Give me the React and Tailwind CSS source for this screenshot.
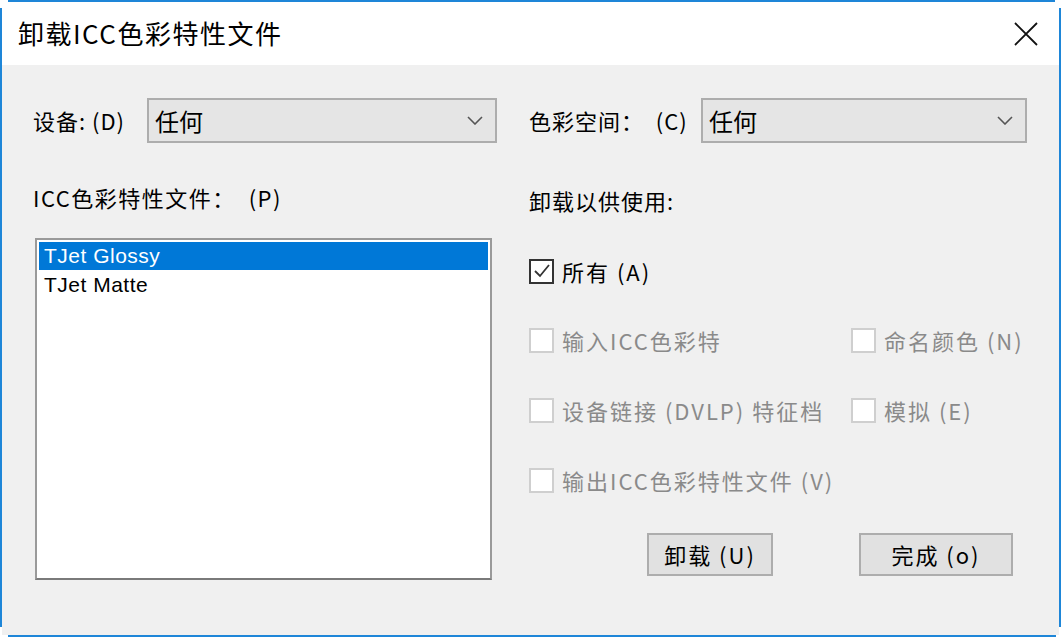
import React from "react";

const FONT = { fontFamily: '"Noto Sans CJK SC", "Liberation Sans", sans-serif' };

// --- small drawn glyphs ---
function Chevron() {
  return (
    <svg width="16" height="9" viewBox="0 0 16 9" className="shrink-0">
      <path d="M1 1 L8 8 L15 1" fill="none" stroke="#555" strokeWidth="1.6" />
    </svg>
  );
}

function CloseX() {
  return (
    <svg width="24" height="24" viewBox="0 0 24 24">
      <path d="M1 1 L23 23 M23 1 L1 23" stroke="#111" strokeWidth="1.8" />
    </svg>
  );
}

function Select({ value }) {
  return (
    <div className="flex-1 h-[45px] flex items-center justify-between bg-[#e5e5e5] border-2 border-[#adadad] pl-[6px] pr-[12px]">
      <span className="text-[24px] text-black leading-none">{value}</span>
      <Chevron />
    </div>
  );
}

function Checkbox({ label, checked, disabled }) {
  return (
    <div className="flex items-center h-[30px]">
      <div
        className={
          "w-[25px] h-[25px] shrink-0 flex items-center justify-center border-2 " +
          (disabled ? "border-[#cfcfcf] bg-white" : "border-[#333333] bg-white")
        }
      >
        {checked && (
          <svg width="18" height="18" viewBox="0 0 18 18">
            <path d="M2 9 L7 14 L16 3" fill="none" stroke="#333" strokeWidth="1.8" />
          </svg>
        )}
      </div>
      <span
        className={
          "ml-[8px] text-[22px] tracking-[2px] leading-none whitespace-nowrap " +
          (disabled ? "text-[#8a8a8a]" : "text-black")
        }
      >
        {label}
      </span>
    </div>
  );
}

function Button({ children, width }) {
  return (
    <button
      className={"h-[43px] bg-[#e1e1e1] border-2 border-[#adadad] text-[22px] tracking-[2px] text-black " + width}
    >
      {children}
    </button>
  );
}

export default function App() {
  return (
    <div className="w-[1063px] h-[638px] bg-white flex flex-col overflow-hidden" style={FONT}>
      {/* top border */}
      <div className="h-[2px] ml-[8px] w-[1047px] bg-[#1e86d8]" />

      <div className="flex flex-1 min-h-0">
        <div className="w-[2px] mt-[6px] mb-[8px] bg-[#1e86d8]" />

        <div className="flex-1 flex flex-col">
          {/* title bar */}
          <div className="h-[63px] flex items-center justify-between pl-[16px] pr-[21px] bg-white">
            <span className="text-[26px] tracking-[1.5px] text-black -mt-[3px]">卸载ICC色彩特性文件</span>
            <CloseX />
          </div>

          {/* body */}
          <div className="flex-1 bg-[#f0f0f0] flex pl-[31px] pt-[33px]">
            {/* left column */}
            <div className="w-[464px] flex flex-col">
              <div className="flex items-center h-[45px]">
                <span className="w-[114px] text-[22px] tracking-[1px] text-black">设备: (D)</span>
                <Select value="任何" />
              </div>
              <div className="mt-[41px] h-[26px] flex items-center text-[22px] tracking-[1.5px] text-black whitespace-pre">
                ICC色彩特性文件：  (P)
              </div>
              <div className="mt-[28px] ml-[2px] w-[457px] h-[342px] bg-white border-2 border-[#9a9a9a] border-b-[#7a7a7a] p-[2px]">
                <div className="h-[28px] bg-[#0078d7] text-white text-[21px] tracking-[0.5px] pl-[5px] flex items-center" style={{ fontFamily: '"Liberation Sans", sans-serif' }}>
                  TJet Glossy
                </div>
                <div className="h-[30px] text-black text-[21px] tracking-[0.5px] pl-[5px] flex items-center" style={{ fontFamily: '"Liberation Sans", sans-serif' }}>
                  TJet Matte
                </div>
              </div>
            </div>

            {/* right column */}
            <div className="ml-[32px] w-[498px] flex flex-col">
              <div className="flex items-center h-[45px]">
                <span className="w-[172px] text-[22px] tracking-[1px] text-black whitespace-pre">色彩空间：  (C)</span>
                <Select value="任何" />
              </div>
              <div className="mt-[45px] h-[24px] flex items-center text-[22px] tracking-[1px] text-black">
                卸载以供使用:
              </div>
              <div className="mt-[44px]">
                <Checkbox label="所有 (A)" checked />
              </div>
              <div className="mt-[39px] grid grid-cols-[322px_1fr] gap-y-[40px]">
                <Checkbox label="输入ICC色彩特" disabled />
                <Checkbox label="命名颜色 (N)" disabled />
                <Checkbox label="设备链接 (DVLP) 特征档" disabled />
                <Checkbox label="模拟 (E)" disabled />
                <Checkbox label="输出ICC色彩特性文件 (V)" disabled />
              </div>
              <div className="mt-[38px] flex justify-end gap-[86px] pr-[14px]">
                <Button width="w-[126px]">卸载 (U)</Button>
                <Button width="w-[154px]">完成 (o)</Button>
              </div>
            </div>
          </div>
        </div>

        <div className="w-[2px] mt-[6px] mb-[8px] bg-[#1e86d8]" />
        <div className="w-[2px]" />
      </div>

      {/* bottom border */}
      <div className="h-[2px] ml-[8px] w-[1048px] bg-[#1e86d8]" />
      <div className="h-[1px]" />
    </div>
  );
}
